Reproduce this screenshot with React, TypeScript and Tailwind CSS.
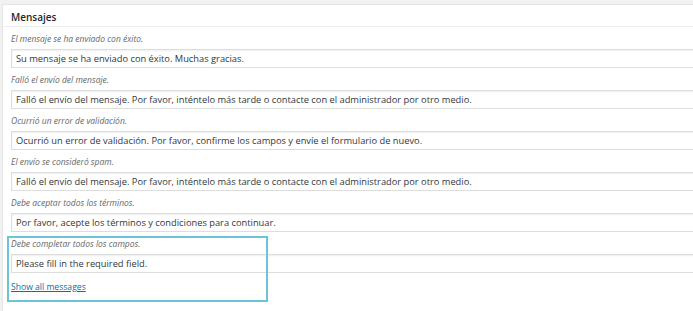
import React from "react";

const messages = [
  {
    label: "El mensaje se ha enviado con éxito.",
    value: "Su mensaje se ha enviado con éxito. Muchas gracias."
  },
  {
    label: "Falló el envío del mensaje.",
    value:
      "Falló el envío del mensaje. Por favor, inténtelo más tarde o contacte con el administrador por otro medio."
  },
  {
    label: "Ocurrió un error de validación.",
    value: "Ocurrió un error de validación. Por favor, confirme los campos y envíe el formulario de nuevo."
  },
  {
    label: "El envío se consideró spam.",
    value:
      "Falló el envío del mensaje. Por favor, inténtelo más tarde o contacte con el administrador por otro medio."
  },
  {
    label: "Debe aceptar todos los términos.",
    value: "Por favor, acepte los términos y condiciones para continuar."
  }
];

function MessageField({ label, value }: { label: string; value: string }) {
  return (
    <div>
      <p className="flex h-[22px] items-end pb-[4px] text-[8.5px] leading-[12px] italic text-[#666]">{label}</p>
      <input
        readOnly
        value={value}
        className="block h-[19px] w-[700px] border border-[#ddd] bg-white px-[4px] text-[9.3px] text-[#32373c] shadow-[inset_0_1px_2px_rgba(0,0,0,0.07)] outline-none"
      />
    </div>
  );
}

export default function App() {
  return (
    <div
      className="h-[311px] overflow-hidden bg-[#f1f1f1] pt-[4px] pl-[2px]"
      style={{ fontFamily: '"Open Sans", "Noto Sans", sans-serif' }}
    >
      <div className="h-[400px] w-[720px] border border-[#e5e5e5] bg-white">
        <div className="flex h-[22px] items-center border-b border-[#eee] px-[8px] pt-[3px] text-[10px] font-semibold text-[#23282d]">
          Mensajes
        </div>
        <div className="pl-[8px]">
          {messages.map((m) => (
            <MessageField key={m.label} label={m.label} value={m.value} />
          ))}
          <div className="relative">
            <MessageField label="Debe completar todos los campos." value="Please fill in the required field." />
            <div className="flex h-[24px] items-center pt-[4px]">
              <a href="#" className="text-[8.6px] text-[#0073aa] underline">
                Show all messages
              </a>
            </div>
            <div className="pointer-events-none absolute top-[4px] left-[-4px] h-[66px] w-[261px] border-2 border-[#6cc4d8]" />
          </div>
        </div>
      </div>
    </div>
  );
}
